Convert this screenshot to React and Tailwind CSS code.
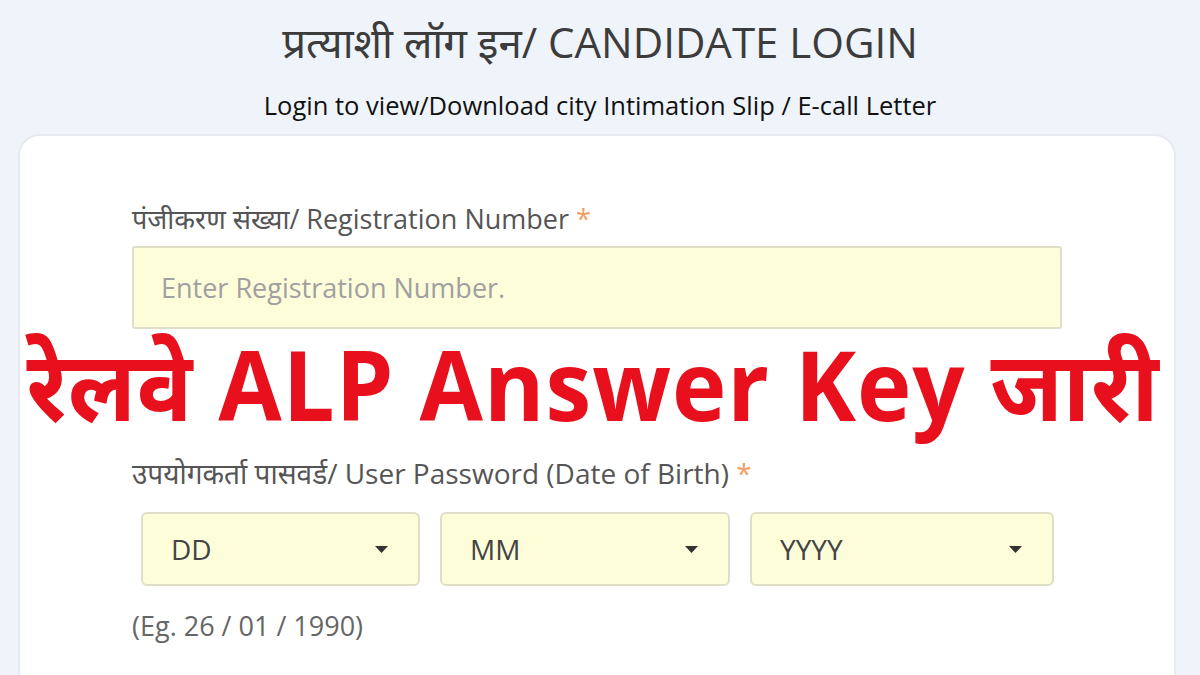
import { useState } from 'react';

const FONT = '"Open Sans", "Noto Sans Devanagari", "Lohit Devanagari", "Noto Sans", sans-serif';

function Caret() {
  return (
    <svg width="13" height="7" viewBox="0 0 13 7" className="shrink-0">
      <path d="M0 0 L13 0 L6.5 7 Z" fill="#333" />
    </svg>
  );
}

function DateSelect({ label, width }) {
  return (
    <div
      className="h-[74px] flex items-center justify-between pl-[28px] pr-[30px] rounded-[6px] border-2 border-[#dedec9] bg-[#fdfdd9]"
      style={{ width }}
    >
      <span className="text-[28px] text-[#444]">{label}</span>
      <Caret />
    </div>
  );
}

export default function App() {
  const [reg, setReg] = useState('');

  return (
    <div className="w-[1200px] h-[675px] overflow-hidden bg-[#eff4fa] relative" style={{ fontFamily: FONT }}>
      {/* header */}
      <div className="pt-[15px] flex flex-col items-center">
        <h1 className="text-[42px] leading-[54px] text-[#3c3c3c] font-normal">
          प्रत्याशी लॉग इन/ CANDIDATE LOGIN
        </h1>
        <p className="mt-[20px] text-[25.5px] leading-[32px] text-[#111]">
          Login to view/Download city Intimation Slip / E-call Letter
        </p>
      </div>

      {/* card */}
      <div className="ml-[18px] mt-[13px] w-[1158px] h-[600px] bg-white rounded-[22px] border-2 border-[#e6eaee] pl-[112px] pt-[65px]">
        <label className="block text-[27px] leading-[36px] text-[#555]">
          पंजीकरण संख्या/ Registration Number <span className="text-[#f0a060]">*</span>
        </label>
        <input
          value={reg}
          onChange={e => setReg(e.target.value)}
          placeholder="Enter Registration Number."
          className="mt-[9px] w-[930px] h-[83px] px-[27px] text-[27px] bg-[#fdfdd9] border-2 border-[#dedec9] rounded-[3px] outline-none placeholder:text-[#a0a0a0] text-[#444]"
        />

        <label className="block mt-[126px] text-[28px] leading-[36px] text-[#555]">
          उपयोगकर्ता पासवर्ड/ User Password (Date of Birth) <span className="text-[#f0a060]">*</span>
        </label>
        <div className="mt-[21px] ml-[9px] flex gap-[20px]">
          <DateSelect label="DD" width={279} />
          <DateSelect label="MM" width={290} />
          <DateSelect label="YYYY" width={304} />
        </div>
        <p className="mt-[22px] text-[27px] leading-[36px] text-[#666]">(Eg. 26 / 01 / 1990)</p>
      </div>

      {/* overlay headline */}
      <div className="absolute left-0 right-0 top-[324px] flex justify-center">
        <span className="text-[92px] leading-[120px] font-bold text-[#e8101c] tracking-[1px] whitespace-nowrap scale-y-[1.06] ml-[-14px]">
          रेलवे ALP Answer Key जारी
        </span>
      </div>
    </div>
  );
}
